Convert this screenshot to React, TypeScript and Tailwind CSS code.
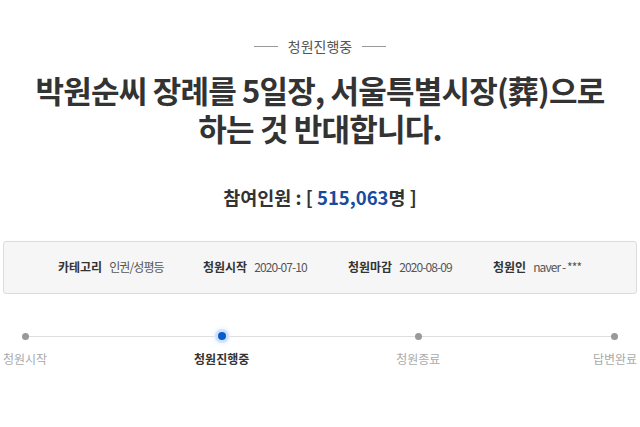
const steps = [
  { label: "청원시작", active: false },
  { label: "청원진행중", active: true },
  { label: "청원종료", active: false },
  { label: "답변완료", active: false },
];

function InfoItem({ label, value }: { label: string; value: string }) {
  return (
    <div className="flex w-[145px] shrink-0 items-center gap-[7px]">
      <span className="font-bold text-[#333]">{label}</span>
      <span className="tracking-[-0.9px] text-[#555]">{value}</span>
    </div>
  );
}

export default function App() {
  return (
    <main
      className="h-[427px] w-[640px] bg-white"
      style={{ fontFamily: '"Noto Sans CJK KR", "Noto Sans", sans-serif' }}
    >
      <div className="flex items-center justify-center gap-[10px] pt-[36px] text-[14px] text-[#555]">
        <span className="h-px w-[24px] bg-[#999]" />
        <span>청원진행중</span>
        <span className="h-px w-[24px] bg-[#999]" />
      </div>

      <h1 className="mt-[14px] text-center text-[31px] font-bold leading-[38px] tracking-[-0.8px] text-[#333]">
        박원순씨 장례를 5일장, 서울특별시장(葬)으로
        <br />
        하는 것 반대합니다.
      </h1>

      <p className="mt-[37px] text-center text-[18.5px] font-bold text-[#333]">
        참여인원 : [ <span className="text-[#1a4a9c]">515,063</span>명 ]
      </p>

      <div className="mx-[3px] mt-[29px] flex h-[53px] items-center rounded-[3px] border border-[#dcdcdc] bg-[#f6f6f6] pl-[54px] text-[12px]">
        <InfoItem label="카테고리" value="인권/성평등" />
        <InfoItem label="청원시작" value="2020-07-10" />
        <InfoItem label="청원마감" value="2020-08-09" />
        <InfoItem label="청원인" value="naver - ***" />
      </div>

      <div className="relative mx-[2px] mt-[36px]">
        <div className="absolute left-[22px] right-[22px] top-[6px] h-px bg-[#dedede]" />
        <div className="relative flex justify-between">
          {steps.map((s) => (
            <div key={s.label} className="flex w-[46px] flex-col items-center">
              <div className="flex h-[13px] items-center justify-center">
                {s.active ? (
                  <span className="h-[8px] w-[8px] rounded-full bg-[#0b5cc7] shadow-[0_0_0_3px_#cfe2fb,0_0_4px_4px_#e6f0fd]" />
                ) : (
                  <span className="h-[7px] w-[7px] rounded-full bg-[#999]" />
                )}
              </div>
              <span
                className={
                  "mt-[7px] whitespace-nowrap text-[12px] " +
                  (s.active ? "font-bold text-[#333]" : "text-[#aaa]")
                }
              >
                {s.label}
              </span>
            </div>
          ))}
        </div>
      </div>
    </main>
  );
}
